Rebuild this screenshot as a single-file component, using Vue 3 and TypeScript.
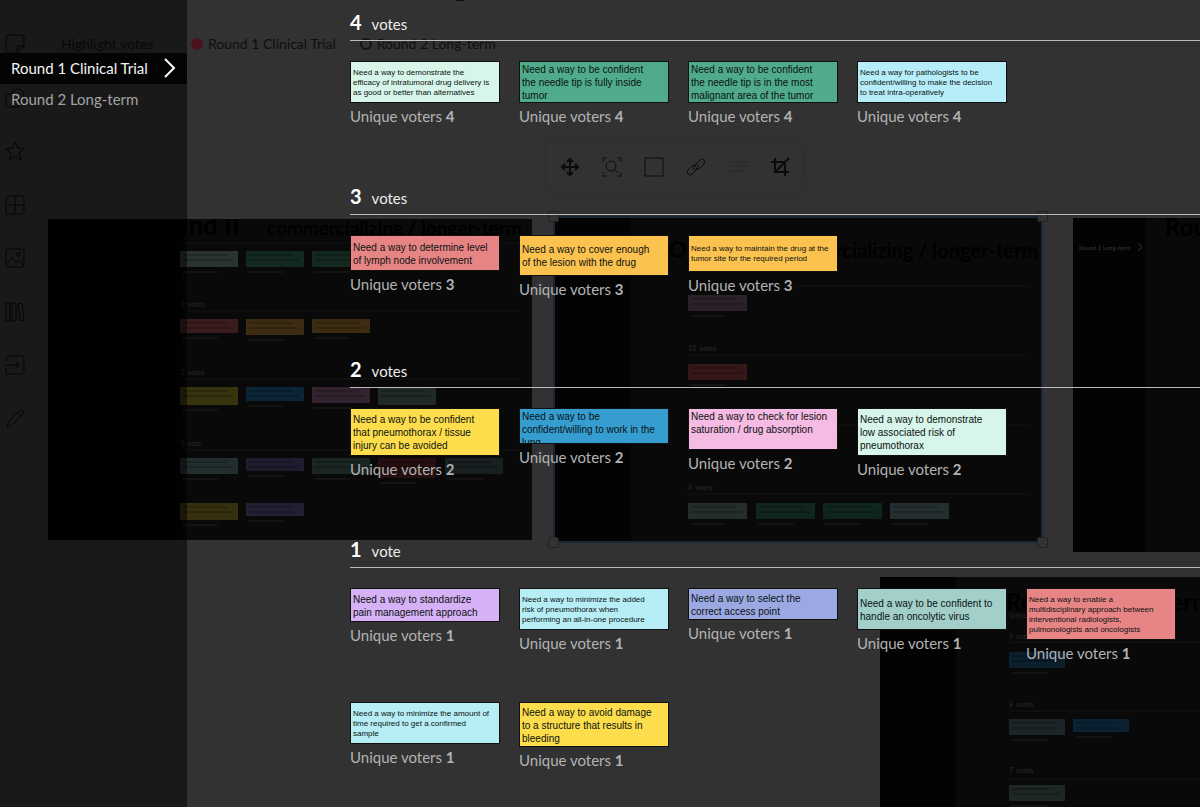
<script setup lang="ts">
import { ref } from 'vue'

interface Note {
  text: string
  color: string
  height: number
  size: 'small' | 'large'
  top?: boolean
}
interface Group {
  votes: number
  notes: Note[]
}
interface Thumb {
  x: number
  y: number
  w: number
  h: number
  fill: string
}
interface Label {
  x: number
  y: number
  text: string
  size: number
  fill: string
}
interface Board {
  name: string
  width: number
  height: number
  rail: number
  thumbs: Thumb[]
  lines: number[]
  lineStart: number
  labels: Label[]
}

const sessions = ['Round 1 Clinical Trial', 'Round 2 Long-term']
const active = ref(0)

const groups: Group[] = [
  {
    votes: 4,
    notes: [
      { text: 'Need a way to demonstrate the\nefficacy of intratumoral drug delivery is\nas good or better than alternatives', color: '#d7f5e8', height: 42, size: 'small' },
      { text: 'Need a way to be confident\nthe needle tip is fully inside\ntumor', color: '#50ab8b', height: 42, size: 'large' },
      { text: 'Need a way to be confident\nthe needle tip is in the most\nmalignant area of the tumor', color: '#50ab8b', height: 42, size: 'large' },
      { text: 'Need a way for pathologists to be\nconfident/willing to make the decision\nto treat intra-operatively', color: '#b7edf8', height: 42, size: 'small' },
    ],
  },
  {
    votes: 3,
    notes: [
      { text: 'Need a way to determine level\nof lymph node involvement', color: '#e78585', height: 36, size: 'large' },
      { text: 'Need a way to cover enough\nof the lesion with the drug', color: '#fbc24f', height: 41, size: 'large' },
      { text: 'Need a way to maintain the drug at the\ntumor site for the required period', color: '#fbc24f', height: 37, size: 'small' },
    ],
  },
  {
    votes: 2,
    notes: [
      { text: 'Need a way to be confident\nthat pneumothorax / tissue\ninjury can be avoided', color: '#fddd4b', height: 48, size: 'large' },
      { text: 'Need a way to be\nconfident/willing to work in the\nlung', color: '#359dd0', height: 36, size: 'large' },
      { text: 'Need a way to check for lesion\nsaturation / drug absorption', color: '#f6bbe2', height: 42, size: 'large', top: true },
      { text: 'Need a way to demonstrate\nlow associated risk of\npneumothorax', color: '#d7f5e8', height: 48, size: 'large' },
    ],
  },
  {
    votes: 1,
    notes: [
      { text: 'Need a way to standardize\npain management approach', color: '#d6b1f5', height: 34, size: 'large' },
      { text: 'Need a way to minimize the added\nrisk of pneumothorax when\nperforming an all-in-one procedure', color: '#b7edf4', height: 42, size: 'small' },
      { text: 'Need a way to select the\ncorrect access point', color: '#9ba8e2', height: 32, size: 'large' },
      { text: 'Need a way to be confident to\nhandle an oncolytic virus', color: '#a3cfca', height: 42, size: 'large' },
      { text: 'Need a way to enable a\nmultidisciplinary approach between\ninterventional radiologists,\npulmonologists and oncologists', color: '#e78585', height: 52, size: 'small' },
      { text: 'Need a way to minimize the amount of\ntime required to get a confirmed\nsample', color: '#b7edf4', height: 42, size: 'small' },
      { text: 'Need a way to avoid damage\nto a structure that results in\nbleeding', color: '#fddd4b', height: 45, size: 'large' },
    ],
  },
]

const tile = (x: number, y: number, h: number, fill: string, w = 58): Thumb => ({ x, y, w, h, fill })
const mark = (x: number, y: number, text: string): Label => ({ x, y, text, size: 7, fill: '#232323' })

const boards: Board[] = [
  {
    name: 'first', width: 484, height: 321, rail: 135, lineStart: 137,
    thumbs: [
      tile(132, 32, 16, '#2a3330'), tile(198, 32, 16, '#13281f'), tile(264, 32, 16, '#13281f'),
      tile(132, 100, 14, '#3a1c1e'), tile(198, 100, 16, '#3c2d12'), tile(264, 100, 14, '#3c2d12'),
      tile(132, 168, 18, '#37330f'), tile(198, 168, 14, '#0b2536'), tile(264, 168, 16, '#33232f'), tile(330, 168, 18, '#1f2926'),
      tile(132, 239, 16, '#222d2d'), tile(198, 239, 13, '#1f1c2f'), tile(264, 239, 16, '#1b2524'), tile(330, 239, 20, '#250e10'), tile(397, 239, 16, '#171f20'),
      tile(132, 284, 17, '#37300f'), tile(198, 284, 13, '#251f33'),
    ],
    lines: [24, 92, 160, 231],
    labels: [
      { x: 95, y: 16, text: 'Round II', size: 26, fill: '#000000' },
      { x: 219, y: 16, text: 'commercializing / longer-term', size: 19, fill: '#000000' },
      mark(132, 88, '3  votes'), mark(132, 156, '2  votes'), mark(132, 227, '1  vote'),
    ],
  },
  {
    name: 'second', width: 486, height: 323, rail: 76, lineStart: 133,
    thumbs: [
      tile(133, 77, 16, '#2b212a', 59), tile(133, 146, 16, '#351719', 59),
      tile(133, 285, 16, '#242d2a', 59), tile(201, 285, 16, '#10251d', 59), tile(268, 285, 16, '#10251d', 59), tile(335, 285, 16, '#232e31', 59),
    ],
    lines: [68, 137, 207, 276],
    labels: [
      { x: 114, y: 40, text: 'O', size: 22, fill: '#000000' },
      { x: 215, y: 40, text: 'commercializing / longer-term', size: 20, fill: '#000000' },
      mark(133, 133, '10  votes'), mark(133, 272, '4  votes'),
    ],
  },
  {
    name: 'third', width: 484, height: 334, rail: 72, lineStart: 500,
    thumbs: [],
    lines: [],
    labels: [
      { x: 92, y: 18, text: 'Round 1', size: 24, fill: '#000000' },
      { x: 6, y: 32, text: 'Round 2 Long-term', size: 6, fill: '#2b2b2b' },
    ],
  },
  {
    name: 'fourth', width: 484, height: 324, rail: 76, lineStart: 129,
    thumbs: [
      tile(129, 75, 16, '#0b1f2c', 56), tile(129, 142, 16, '#1c2527', 56), tile(193, 142, 13, '#0b2234', 56), tile(129, 208, 16, '#1f2626', 56),
    ],
    lines: [65, 134, 202],
    labels: [
      { x: 129, y: 41, text: 'Votes', size: 7, fill: '#1f1f1f' },
      { x: 126, y: 34, text: 'Round 2 Long-term', size: 24, fill: '#000000' },
      mark(129, 62, '9  votes'), mark(129, 130, '8  votes'), mark(129, 196, '7  votes'),
    ],
  },
]

const tools = [
  { name: 'Sticky note', d: 'M3 1h14q2 0 2 2v9l-7 7H3q-2 0-2-2V3q0-2 2-2M19 12h-5q-2 0-2 2v5' },
  { name: 'Shapes', d: 'M8 6H1v13h13v-6M19 7a6 6 0 1 1-12 0a6 6 0 0 1 12 0' },
  { name: 'Favourites', d: 'M10 1l3 6 6 1-5 4 2 7-6-4-6 4 2-7-5-4 6-1z' },
  { name: 'Frameworks', d: 'M3 1h14q2 0 2 2v14q0 2-2 2H3q-2 0-2-2V3q0-2 2-2M10 1v18M1 10h18' },
  { name: 'Images', d: 'M3 1h14q2 0 2 2v14q0 2-2 2H3q-2 0-2-2V3q0-2 2-2M2 16l5-7 4 6 3-3 5 6M12 5h3v3h-3z' },
  { name: 'Library', d: 'M1 1h4v18H1zM7 1h4v18H7zM13 2l4-1 2 17-4 1z' },
  { name: 'Import', d: 'M1 7V3q0-2 2-2h14q2 0 2 2v14q0 2-2 2H3q-2 0-2-2v-4M0 10h14M10 6l4 4-4 4' },
  { name: 'Draw', d: 'M2 18l2-6L15 1q2-1 3 1t0 3L7 16zM13 3l4 4' },
]

const actions = [
  { name: 'Move', d: 'M9 1v16M1 9h16M6 4l3-3 3 3M6 14l3 3 3-3M4 6L1 9l3 3M14 6l3 3-3 3', w: 2, dim: false },
  { name: 'Zoom to area', d: 'M0 4V0h4M14 0h4v4M18 14v4h-4M4 18H0v-4M13 8A5 5 0 1 1 3 8A5 5 0 0 1 13 8M12 12l3 3', w: 1, dim: false },
  { name: 'Border', d: 'M0 0h18v18H0z', w: 1, dim: false },
  { name: 'Link', d: 'M8 12q-3-2 0-5l5-5q2-2 4 0t0 4l-4 4q-2 2-4 0M10 6q3 2 0 5l-5 5q-2 2-4 0t0-4l4-4q2-2 4 0', w: 1, dim: false },
  { name: 'Lines', d: 'M0 4h18M0 8h18M0 13h18', w: 1, dim: true },
  { name: 'Crop', d: 'M4 0v14h14M0 4h14v14M5 13L18 0', w: 2, dim: false },
]
</script>

<template>
  <div class="page">
    <div class="canvas">
      <span class="descender"></span>

      <fieldset class="highlight">
        <legend>Highlight votes</legend>
        <label><input type="radio" name="highlight" checked />Round 1 Clinical Trial</label>
        <label class="second"><input type="radio" name="highlight" />Round 2 Long-term</label>
      </fieldset>

      <div class="toolbar">
        <button v-for="a in actions" :key="a.name" type="button" :aria-label="a.name" :class="{ dim: a.dim }">
          <svg viewBox="-1 -1 20 20" width="20" height="20"><path :d="a.d" :stroke-width="a.w" /></svg>
        </button>
      </div>

      <div v-for="b in boards" :key="b.name" class="board" :class="b.name">
        <svg :width="b.width" :height="b.height" :viewBox="`0 0 ${b.width} ${b.height}`">
          <rect :width="b.width" :height="b.height" fill="#090909" />
          <rect :width="b.rail" :height="b.height" fill="#030303" />
          <text v-for="l in b.labels" :key="l.text + l.y" :x="l.x" :y="l.y" :font-size="l.size" :fill="l.fill" class="label">{{ l.text }}</text>
          <path v-for="y in b.lines" :key="y" :d="`M${b.lineStart} ${y}H${b.width - 12}`" stroke="#141414" />
          <g v-for="(t, i) in b.thumbs" :key="i">
            <rect :x="t.x" :y="t.y" :width="t.w" :height="t.h" :fill="t.fill" />
            <path :d="`M${t.x + 3} ${t.y + 4}h${t.w - 14}M${t.x + 3} ${t.y + 9}h${t.w - 8}`" stroke="#000" stroke-opacity=".4" />
            <path :d="`M${t.x + 2} ${t.y + t.h + 5}h36`" stroke="#131313" stroke-width="2" />
          </g>
          <path v-if="b.name === 'third'" d="M65 25l4 4-4 4" fill="none" stroke="#333" />
        </svg>
        <template v-if="b.name === 'second'">
          <i class="handle tl"></i><i class="handle tr"></i><i class="handle bl"></i><i class="handle br"></i>
        </template>
      </div>

      <div class="tools">
        <button v-for="t in tools" :key="t.name" type="button" :aria-label="t.name">
          <svg viewBox="0 0 20 20" width="20" height="20"><path :d="t.d" /></svg>
        </button>
      </div>
    </div>

    <div class="results">
      <nav class="sessions">
        <button v-for="(s, i) in sessions" :key="s" type="button" :class="{ active: i === active }" @click="active = i">
          {{ s }}
          <svg v-if="i === active" viewBox="0 0 12 20" width="12" height="20"><path d="M1 1l9 9-9 9" /></svg>
        </button>
      </nav>
      <main>
        <section v-for="g in groups" :key="g.votes">
          <h2><b>{{ g.votes }}</b>{{ g.votes === 1 ? 'vote' : 'votes' }}</h2>
          <div class="notes">
            <article v-for="n in g.notes" :key="n.text">
              <div class="note" :class="[n.size, { top: n.top }]" :style="{ height: n.height + 'px', background: n.color }">
                <p>{{ n.text }}</p>
              </div>
              <p class="voters">Unique voters <b>{{ g.votes }}</b></p>
            </article>
          </div>
        </section>
      </main>
    </div>
  </div>
</template>

<style>
body {
  background: #323232;
  overflow: hidden;
}
</style>

<style scoped>
.page {
  position: relative;
  min-height: 100vh;
  overflow: hidden;
  background: #323232;
  font-family: Lato, 'Liberation Sans', sans-serif;
}
button {
  border: 0;
  padding: 0;
  background: none;
  font: inherit;
  text-align: left;
}
svg {
  display: block;
}
.canvas {
  position: absolute;
  inset: 0;
  overflow: hidden;
}
.descender {
  position: absolute;
  left: 456px;
  top: 0;
  width: 8px;
  height: 1px;
  background: #0c0c0c;
}
.highlight {
  position: absolute;
  left: 61px;
  top: 34px;
  display: flex;
  align-items: center;
  margin: 0;
  padding: 0;
  border: 0;
  font-size: 14px;
  line-height: 20px;
  color: #0e0e0e;
}
.highlight legend {
  float: left;
  width: 130px;
  padding: 0;
}
.highlight label {
  display: flex;
  align-items: center;
  gap: 5px;
}
.highlight label.second {
  margin-left: 24px;
}
.highlight input {
  appearance: none;
  width: 12px;
  height: 12px;
  margin: 0;
  border: 2px solid #1a101c;
  border-radius: 50%;
}
.highlight input:checked {
  border-color: #4a1320;
  background: #4a1320;
}
.toolbar {
  position: absolute;
  left: 548px;
  top: 143px;
  display: flex;
  gap: 22px;
  padding: 14px 12px;
  border-radius: 4px;
  background: #323232;
  box-shadow: 0 0 6px #2e2e2e;
}
.toolbar path {
  fill: none;
  stroke: #0c0c0c;
}
.toolbar .dim path {
  stroke: #272727;
}
.tools {
  position: absolute;
  left: 5px;
  top: 34px;
  height: 395px;
  display: flex;
  flex-direction: column;
  justify-content: space-between;
}
.tools path {
  fill: none;
  stroke: #080808;
  stroke-linejoin: round;
}
.board {
  position: absolute;
}
.first {
  left: 48px;
  top: 219px;
}
.second.board {
  left: 553px;
  top: 216px;
  border: 2px solid #1b2636;
}
.third {
  left: 1073px;
  top: 218px;
}
.fourth {
  left: 880px;
  top: 577px;
}
.label {
  font-weight: 700;
  white-space: pre;
}
.handle {
  position: absolute;
  width: 9px;
  height: 9px;
  border: 1px solid #222222;
  border-radius: 2px;
  background: #333333;
}
.tl {
  left: -7px;
  top: -7px;
}
.tr {
  right: -7px;
  top: -7px;
}
.bl {
  left: -7px;
  bottom: -7px;
}
.br {
  right: -7px;
  bottom: -7px;
}
.results {
  position: relative;
  display: flex;
  min-height: 100vh;
}
.sessions {
  flex: 0 0 187px;
  box-sizing: border-box;
  padding-top: 53px;
  background: rgba(0, 0, 0, 0.5);
}
.sessions button {
  display: flex;
  align-items: center;
  justify-content: space-between;
  box-sizing: border-box;
  width: 100%;
  height: 31px;
  padding: 0 11px 1px;
  font-size: 15px;
  color: #a3a3a3;
}
.sessions button.active {
  background: #040404;
  color: #f4f4f4;
}
.sessions path {
  fill: none;
  stroke: #ffffff;
  stroke-width: 2;
}
main {
  flex: 1;
  min-width: 0;
  display: flex;
  flex-direction: column;
  gap: 60px;
  padding: 12px 0 0 163px;
}
h2 {
  display: flex;
  align-items: baseline;
  gap: 10px;
  margin: 0 0 20px;
  height: 28px;
  border-bottom: 1px solid #b9b9b9;
  font-size: 15px;
  font-weight: 400;
  line-height: 20px;
  color: #ececec;
}
h2 b {
  font-size: 20px;
  color: #ffffff;
}
.notes {
  display: flex;
  flex-wrap: wrap;
  align-items: flex-start;
  gap: 39px 19px;
}
article {
  width: 150px;
}
.note {
  display: flex;
  align-items: safe center;
  box-sizing: border-box;
  padding: 1px 2px 0;
  border: 1px solid #101010;
  overflow: hidden;
  color: #0a1212;
}
.note.top {
  align-items: flex-start;
}
.note p {
  margin: 0;
  white-space: pre;
}
.small {
  font-size: 8px;
  line-height: 10px;
}
.large {
  font-size: 10px;
  line-height: 13px;
}
.small,
.large {
  font-family: 'Liberation Sans', Arial, sans-serif;
}
.voters {
  margin: 3px 0 0;
  font-size: 15px;
  line-height: 20px;
  color: #b2b2b2;
}
</style>
